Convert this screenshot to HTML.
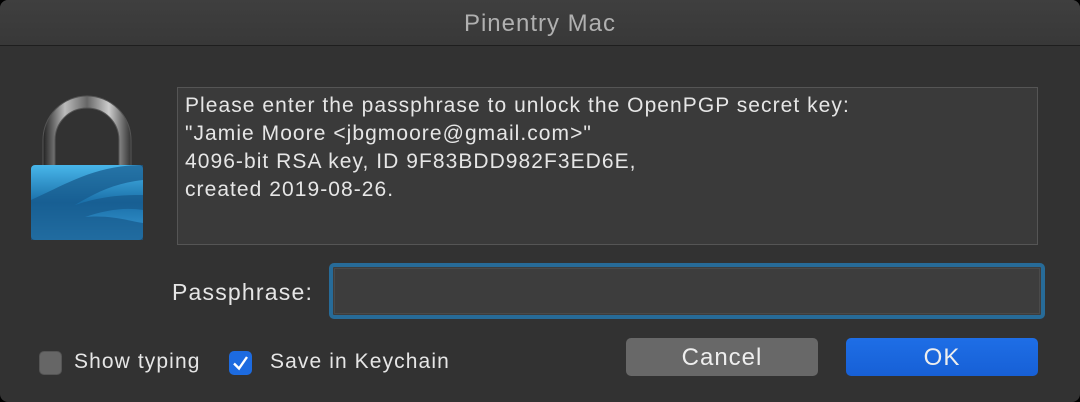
<!DOCTYPE html>
<html><head><style>
body{margin:0;width:1080px;height:402px;background:#000;overflow:hidden;font-family:"Liberation Sans",sans-serif;}
.win{position:absolute;left:0;top:0;width:1080px;height:402px;background:#323232;border-radius:8px;overflow:hidden;}
.title{position:absolute;left:0;top:0;width:1080px;height:45px;background:linear-gradient(#3f3f3f,#383838);border-bottom:1px solid #1e1e1e;color:#b0b0b0;font-size:24px;letter-spacing:1px;text-align:center;line-height:48px;}
.msg{position:absolute;left:177px;top:87px;width:861px;height:158px;background:#3a3a3a;border:1px solid #555;box-sizing:border-box;color:#e6e6e6;font-size:21px;letter-spacing:1.05px;line-height:28px;padding:4px 0 0 7px;white-space:nowrap;}
.lbl{position:absolute;color:#e6e6e6;font-size:21px;letter-spacing:1.1px;white-space:nowrap;}
.inp{position:absolute;left:329px;top:263px;width:716px;height:56px;box-sizing:border-box;border:4px solid #276b98;border-radius:5px;background:#3d3d3d;}
.inp:after{content:"";position:absolute;left:1px;top:1px;right:1px;bottom:1px;border:1px solid #4a4a4a;}
.cb{position:absolute;top:350px;width:23px;height:24px;border-radius:5px;}
.btn{position:absolute;top:338px;width:192px;height:38px;border-radius:5px;color:#eee;font-size:24px;letter-spacing:1px;text-align:center;line-height:40px;}
</style></head><body>
<div class="win">
<div class="title">Pinentry Mac</div>
<svg style="position:absolute;left:25px;top:95px" width="125" height="150" viewBox="0 0 125 150">
<defs>
<linearGradient id="sh" x1="0" x2="1"><stop offset="0" stop-color="#222"/><stop offset="0.25" stop-color="#bbb"/><stop offset="0.5" stop-color="#666"/><stop offset="0.75" stop-color="#ccc"/><stop offset="1" stop-color="#333"/></linearGradient>
<linearGradient id="bd" x1="0" y1="0" x2="0" y2="1"><stop offset="0" stop-color="#48b6ea"/><stop offset="0.5" stop-color="#1a6fa8"/><stop offset="1" stop-color="#3a9ad4"/></linearGradient>
</defs>
<path d="M18 72 V45 A44 44 0 0 1 106 45 V72 H94 V45 A32 32 0 0 0 30 45 V72 Z" fill="url(#sh)" stroke="#555" stroke-width="1"/>
<rect x="6" y="70" width="112" height="75" rx="4" fill="url(#bd)"/>
<path d="M6 105 C40 90 70 70 118 70 V85 C90 88 70 98 50 110 C80 100 100 100 118 100 V115 C100 112 80 115 60 122 C85 120 100 125 118 128 V145 H6 Z" fill="#17598a" opacity="0.7"/>
</svg>
<div class="msg">Please enter the passphrase to unlock the OpenPGP secret key:<br>"Jamie Moore &lt;jbgmoore@gmail.com&gt;"<br>4096-bit RSA key, ID 9F83BDD982F3ED6E,<br>created 2019-08-26.</div>
<div class="lbl" style="left:172px;top:279px;font-size:23px;letter-spacing:1.2px">Passphrase:</div>
<div class="inp"></div>
<div class="cb" style="left:39px;top:351px;background:#666;border:1px solid #555;box-sizing:border-box"></div>
<div class="lbl" style="left:74px;top:350px">Show typing</div>
<div class="cb" style="left:229px;top:351px;background:#1d6be0"><svg width="23" height="24"><path d="M5 12.5 L10 17.5 L18 6" stroke="#fff" stroke-width="2.4" fill="none"/></svg></div>
<div class="lbl" style="left:270px;top:350px">Save in Keychain</div>
<div class="btn" style="left:626px;background:#686868">Cancel</div>
<div class="btn" style="left:846px;background:linear-gradient(#1e6ee6,#1760d6)">OK</div>
</div>
</body></html>
